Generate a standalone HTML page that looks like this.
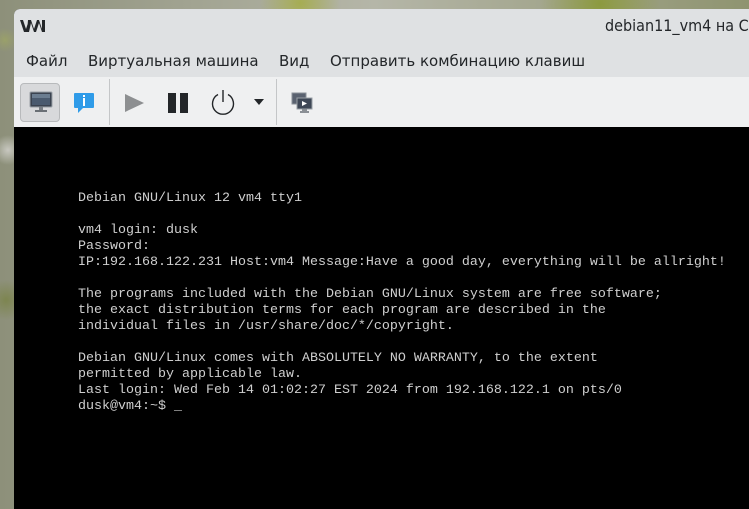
<!DOCTYPE html>
<html><head><meta charset="utf-8"><style>
*{margin:0;padding:0;box-sizing:border-box}
body{width:749px;height:496px;overflow:hidden;position:relative;
background:radial-gradient(circle at 5px 40px,#9aa06a 0,transparent 12px),radial-gradient(circle at 8px 150px,#c8c8c0 0,transparent 15px),radial-gradient(circle at 6px 300px,#7d8550 0,transparent 20px),radial-gradient(circle at 300px 3px,#a6ad52 0,transparent 40px),radial-gradient(circle at 600px 4px,#8c9a3e 0,transparent 60px),linear-gradient(90deg,#8d907a,#b5b6a8 50%,#8f9470);font-family:"Liberation Sans","DejaVu Sans",sans-serif}
.win{position:absolute;left:14px;top:9px;width:760px;height:500px;background:#000;border-top-left-radius:6px;overflow:hidden}
.title{height:34px;background:#dfe1e3;position:relative}
.title .t{position:absolute;left:591px;top:7px;font-size:16px;color:#232629;font-family:"DejaVu Sans Condensed","DejaVu Sans",sans-serif;font-stretch:condensed}
.menu{height:34px;background:#dfe1e3;font-size:15.5px;color:#232629;position:relative}
.menu span{position:absolute;top:9px;font-family:"DejaVu Sans",sans-serif;font-size:15px}
.tb{height:50px;background:#eff0f1;position:relative}
.btn{position:absolute;left:6px;top:6px;width:40px;height:39px;background:#d8d9db;border:1px solid #b8babc;border-radius:4px}
.sep{position:absolute;top:2px;width:1px;height:46px;background:#c4c6c8}
.term{position:absolute;left:78px;top:191px;font-family:"Liberation Mono",monospace;font-size:13.33px;line-height:16px;color:#cfcfcf;white-space:pre}
svg{position:absolute}
</style></head><body>
<div class="win">
<div class="title">
<svg style="left:6px;top:10px" width="26" height="14" viewBox="0 0 26 14"><path d="M0 1h3l3 9 3-9h2l-4 12h-3zM8 1h3l3 9 3-9h2l3 9 0-9h3v12h-3l-3-9-3 9h-2l-3-9-2 9h-2z" fill="#232629"/></svg>
<div class="t">debian11_vm4 на С</div>
</div>
<div class="menu">
<span style="left:12px">Файл</span>
<span style="left:74px">Виртуальная машина</span>
<span style="left:265px">Вид</span>
<span style="left:316px">Отправить комбинацию клавиш</span>
</div>
<div class="tb">
<div class="btn"></div>
<svg style="left:15px;top:14px" width="24" height="22" viewBox="0 0 24 22"><rect x="1" y="1" width="22" height="15" rx="1" fill="#3b4350" stroke="#9aa0a6"/><rect x="3" y="3" width="18" height="11" fill="#4a5a6e"/><rect x="3" y="3" width="18" height="4" fill="#6b7d90"/><rect x="10" y="16" width="4" height="3" fill="#7a7f85"/><rect x="6" y="19" width="12" height="2" fill="#6a6f75"/></svg>
<svg style="left:59px;top:15px" width="22" height="22" viewBox="0 0 22 22"><rect x="1" y="1" width="20" height="15" rx="1" fill="#2f9be8"/><path d="M5 16v5l5-5z" fill="#2f9be8"/><rect x="10" y="6" width="2" height="8" fill="#fff"/><rect x="10" y="3" width="2" height="2" fill="#fff"/></svg>
<div class="sep" style="left:95px"></div>
<svg style="left:110px;top:16px" width="22" height="20" viewBox="0 0 22 20"><path d="M1 1l19 9-19 9z" fill="#8d8f91"/></svg>
<svg style="left:154px;top:15px" width="22" height="22" viewBox="0 0 22 22"><rect x="0" y="1" width="8" height="20" fill="#232629"/><rect x="12" y="1" width="8" height="20" fill="#232629"/></svg>
<svg style="left:196px;top:13px" width="26" height="26" viewBox="0 0 26 26"><path d="M8 4.5A10.5 10.5 0 1 0 18 4.5" fill="none" stroke="#232629" stroke-width="1.4"/><path d="M13 0v12" stroke="#232629" stroke-width="1.4"/></svg>
<svg style="left:240px;top:22px" width="10" height="6" viewBox="0 0 10 6"><path d="M0 0h10l-5 6z" fill="#232629"/></svg>
<div class="sep" style="left:262px"></div>
<svg style="left:277px;top:15px" width="22" height="22" viewBox="0 0 22 22"><rect x="1" y="1" width="14" height="11" fill="#5a6270" stroke="#8a9098"/><rect x="6" y="6" width="15" height="11" fill="#3e4756" stroke="#9aa0a6"/><path d="M11 9l5 2.5-5 2.5z" fill="#fff"/><rect x="11" y="17" width="5" height="2" fill="#8a8f95"/><rect x="9" y="19" width="9" height="2" fill="#8a8f95"/></svg>
</div>
</div>
<div class="term">Debian GNU/Linux 12 vm4 tty1

vm4 login: dusk
Password:
IP:192.168.122.231 Host:vm4 Message:Have a good day, everything will be allright!

The programs included with the Debian GNU/Linux system are free software;
the exact distribution terms for each program are described in the
individual files in /usr/share/doc/*/copyright.

Debian GNU/Linux comes with ABSOLUTELY NO WARRANTY, to the extent
permitted by applicable law.
Last login: Wed Feb 14 01:02:27 EST 2024 from 192.168.122.1 on pts/0
dusk@vm4:~$ _</div>
</body></html>
